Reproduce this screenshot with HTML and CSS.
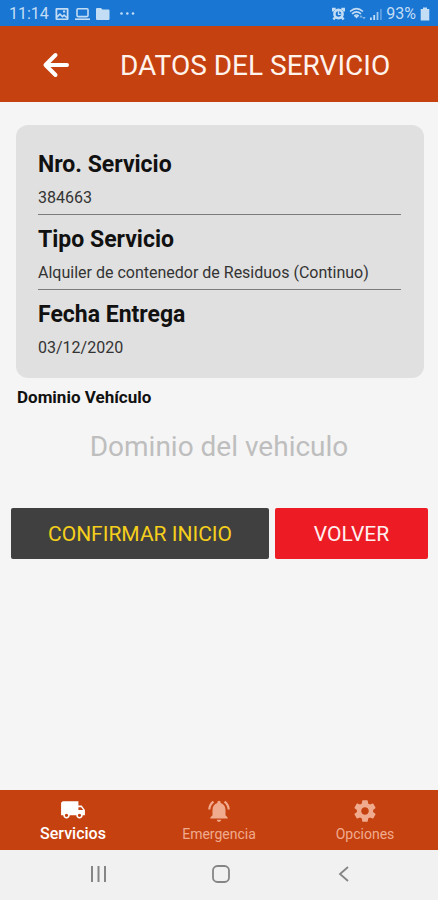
FILE: index.html
```
<!DOCTYPE html>
<html lang="es">
<head>
    <meta charset="UTF-8">
    <meta name="viewport" content="width=device-width, initial-scale=1.0">
    <title>Datos del servicio</title>
    <link rel="stylesheet" href="styles.css">
</head>
<body>
    <div class="status-bar">
        <div class="status-group">
            <span class="status-time">11:14</span>
            <svg width="14" height="14" viewBox="0 0 14 14" fill="currentColor">
                <path fill-rule="evenodd" d="M1.500 1h11q1 0 1 1v10q0 1-1 1h-11q-1 0-1-1V2q0-1 1-1zM2.300 2.800v5.700L5 6l2.500 2.500L9 7l2.700 2.500V2.800zM2.300 10.700v.8h9.400v-.3L9 9.300l-1.500 1.500L5 8.300zM8 3.500h2.200v2H8z"/>
            </svg>
            <svg width="15" height="14" viewBox="0 0 15 14" fill="none" stroke="currentColor" stroke-width="1.600">
                <rect x="2" y="1.800" width="11" height="7.800" rx="1"/>
                <path d="M0 12.200h15"/>
            </svg>
            <svg width="14" height="14" viewBox="0 0 14 14" fill="currentColor">
                <path d="M0 2Q0 1 1 1h4l1.500 1.500H12.500q1 0 1 1V12q0 1-1 1H1q-1 0-1-1z"/>
            </svg>
            <svg class="dots" width="15" height="14" viewBox="0 0 15 14" fill="currentColor">
                <circle cx="1.500" cy="6.500" r="1.300"/>
                <circle cx="7.300" cy="6.500" r="1.300"/>
                <circle cx="13" cy="6.500" r="1.300"/>
            </svg>
        </div>
        <div class="status-group status-right">
            <svg width="13" height="14" viewBox="0 0 14 14" fill="none" stroke="currentColor">
                <circle cx="7" cy="7" r="4.400" stroke-width="2.800"/>
                <path stroke-width="1.400" d="M7 4V7.300h2.500"/>
                <path stroke-width="2.600" d="M1.200 4.200V1.500h2.800M10 1.500h2.800V4.200M3.500 10.500L1.500 13M10.500 10.500L12.500 13"/>
            </svg>
            <svg width="17" height="14" viewBox="0 0 17 14" fill="none" stroke="currentColor" stroke-width="1.600">
                <path d="M1 4.500Q7.500-1.200 14 4.500M3 6.800Q7.500 3 12 6.800M5.200 9Q7.500 7 9.800 9"/>
                <path fill="currentColor" stroke="none" d="M5.300 9h4.400l-2.200 2.600z"/>
                <path fill="currentColor" stroke="none" opacity=".6" d="M12 8l1.700 2.500h-3.400zM15 12.500l-1.700-2.500h3.400z"/>
            </svg>
            <svg width="12" height="14" viewBox="0 0 12 14" fill="currentColor">
                <path d="M0 10.500h1.800V13H0zM3.300 8h1.800v5H3.300z"/>
                <path opacity=".8" d="M6.600 5h1.800v8H6.600z"/>
                <path opacity=".4" d="M10 2h1.800v11H10z"/>
            </svg>
            <span class="status-battery">93%</span>
            <svg width="10" height="14" viewBox="0 0 10 14" fill="currentColor">
                <path d="M3 0.500h4V2h2.300v11.500H0.700V2H3z"/>
            </svg>
        </div>
    </div>

    <header class="header">
        <button class="back-btn" type="button" aria-label="Atrás">
            <svg width="28" height="26" viewBox="0 0 28 26" fill="none" stroke="currentColor" stroke-width="4" stroke-linecap="round" stroke-linejoin="round">
                <path d="M13.500 3L3.500 13l10 10M4 13h21"/>
            </svg>
        </button>
        <h1>DATOS DEL SERVICIO</h1>
    </header>

    <main class="content">
        <dl class="card">
            <div class="card-row">
                <dt>Nro. Servicio</dt>
                <dd>384663</dd>
            </div>
            <div class="card-row">
                <dt>Tipo Servicio</dt>
                <dd>Alquiler de contenedor de Residuos (Continuo)</dd>
            </div>
            <div class="card-row">
                <dt>Fecha Entrega</dt>
                <dd>03/12/2020</dd>
            </div>
        </dl>

        <form class="form">
            <label class="form-label" for="dominio">Dominio Vehículo</label>
            <input class="form-input" id="dominio" type="text" placeholder="Dominio del vehiculo">
            <div class="buttons">
                <button class="btn btn-confirm" type="submit">CONFIRMAR INICIO</button>
                <button class="btn btn-back" type="button">VOLVER</button>
            </div>
        </form>
    </main>

    <nav class="tabs">
        <a class="tab active" href="#servicios">
            <svg width="26" height="26" viewBox="0 1 24 24" fill="currentColor">
                <path d="M20 8h-3V4H3c-1.100 0-2 .9-2 2v11h2c0 1.660 1.340 3 3 3s3-1.340 3-3h6c0 1.660 1.340 3 3 3s3-1.340 3-3h2v-5l-3-4zM6 18.500c-.83 0-1.500-.67-1.500-1.500s.67-1.500 1.500-1.500 1.500.67 1.500 1.500-.67 1.500-1.500 1.500zm13.500-9l1.960 2.500H17V9.500h2.500zm-1.500 9c-.83 0-1.500-.67-1.500-1.500s.67-1.500 1.500-1.500 1.500.67 1.500 1.500-.67 1.500-1.500 1.500z"/>
            </svg>
            <span>Servicios</span>
        </a>
        <a class="tab" href="#emergencia">
            <svg width="26" height="26" viewBox="0 0 24 24" fill="currentColor">
                <path d="M7.580 4.080L6.150 2.650C3.750 4.480 2.170 7.300 2.030 10.500h2c.15-2.650 1.510-4.970 3.550-6.420zm12.390 6.420h2c-.15-3.200-1.730-6.020-4.120-7.850l-1.420 1.430c2.020 1.450 3.390 3.770 3.540 6.420zM18 11c0-3.070-1.640-5.640-4.500-6.320V4c0-.83-.67-1.500-1.500-1.500s-1.500.67-1.500 1.500v.68C7.630 5.360 6 7.920 6 11v5l-2 2v1h16v-1l-2-2v-5zm-6 11c.14 0 .27-.01.4-.04.650-.14 1.180-.58 1.440-1.180.1-.24.150-.5.150-.78h-4c.01 1.100.9 2 2.010 2z"/>
            </svg>
            <span>Emergencia</span>
        </a>
        <a class="tab" href="#opciones">
            <svg width="26" height="26" viewBox="0 0 24 24" fill="currentColor">
                <path d="M19.430 12.980c.04-.32.070-.64.070-.98s-.03-.66-.07-.98l2.110-1.650c.19-.15.240-.42.120-.64l-2-3.460c-.12-.22-.39-.3-.61-.22l-2.490 1c-.52-.4-1.080-.73-1.690-.98l-.38-2.650C14.460 2.180 14.250 2 14 2h-4c-.25 0-.46.180-.49.420l-.38 2.650c-.61.250-1.170.590-1.690.980l-2.490-1c-.23-.09-.49 0-.61.220l-2 3.460c-.13.220-.07.490.120.640l2.110 1.650c-.04.320-.07.650-.07.980s.030.660.070.980l-2.110 1.650c-.19.150-.24.420-.12.640l2 3.460c.12.220.390.300.610.220l2.490-1c.52.400 1.080.730 1.690.980l.38 2.650c.03.240.240.420.490.420h4c.25 0 .46-.18.490-.42l.38-2.650c.61-.25 1.170-.59 1.690-.98l2.490 1c.23.090.490 0 .610-.22l2-3.460c.12-.22.070-.49-.12-.64l-2.110-1.650zM12 15.500c-1.930 0-3.500-1.570-3.500-3.500s1.570-3.500 3.500-3.500 3.500 1.570 3.500 3.500-1.570 3.500-3.500 3.500z"/>
            </svg>
            <span>Opciones</span>
        </a>
    </nav>

    <div class="system-nav">
        <button type="button" aria-label="Recientes">
            <svg width="20" height="20" viewBox="0 0 20 20" fill="none" stroke="currentColor" stroke-width="2">
                <path d="M4 2v16M10.500 2v16M17 2v16"/>
            </svg>
        </button>
        <button type="button" aria-label="Inicio">
            <svg width="20" height="20" viewBox="0 0 20 20" fill="none" stroke="currentColor" stroke-width="1.800">
                <rect x="2" y="2" width="16" height="16" rx="4.500"/>
            </svg>
        </button>
        <button type="button" aria-label="Volver">
            <svg width="20" height="20" viewBox="0 0 20 20" fill="none" stroke="currentColor" stroke-width="1.800">
                <path d="M14 3L6 10l8 7"/>
            </svg>
        </button>
    </div>
</body>
</html>
```

FILE: styles.css
```
:root {
    --orange: #c64110;
    --blue: #1976d3;
    --background: #f5f5f5;
    --card: #e0e0e0;
    --dark: #404040;
    --red: #ed1c24;
    --yellow: #f5cf1b;
}

* {
    margin: 0;
    padding: 0;
    box-sizing: border-box;
}

body {
    display: flex;
    flex-direction: column;
    min-height: 100vh;
    font-family: Roboto, sans-serif;
    background-color: var(--background);
    color: #111;
}

button {
    border: none;
    background: none;
    font-family: inherit;
    cursor: pointer;
}

svg {
    display: block;
}

.status-bar {
    display: flex;
    justify-content: space-between;
    align-items: center;
    height: 26px;
    padding: 1px 8px 0 9px;
    background-color: var(--blue);
    color: #c3ddf5;
    font-size: 16px;
}

.status-group {
    display: flex;
    align-items: center;
    gap: 6px;
}

.status-right {
    gap: 4px;
}

.dots {
    margin-left: 4px;
}

.header {
    display: flex;
    align-items: center;
    height: 76px;
    padding: 2px 42px 0;
    background-color: var(--orange);
    color: #fff3ec;
}

.back-btn {
    color: #fff;
}

.header h1 {
    flex: 1;
    margin-left: 50px;
    font-size: 28px;
    font-weight: 400;
    white-space: nowrap;
}

.content {
    flex: 1;
    padding: 23px 10px 0;
}

.card {
    margin: 0 4px 0 6px;
    padding: 15px 23px 13px 22px;
    background-color: var(--card);
    border-radius: 12px;
}

.card-row {
    padding-top: 8px;
    border-bottom: 1px solid #7c7c7c;
}

.card-row:last-child {
    border-bottom-color: transparent;
}

.card dt {
    font-size: 23px;
    font-weight: 700;
    line-height: 34px;
}

.card dd {
    color: #333;
    font-size: 16px;
    line-height: 32px;
}

.form-label {
    display: block;
    margin-left: 7px;
    font-size: 17px;
    font-weight: 700;
    line-height: 38px;
}

.form-input {
    display: block;
    width: 100%;
    height: 60px;
    border: none;
    outline: none;
    background: none;
    font-family: inherit;
    font-size: 28px;
    text-align: center;
}

.form-input::placeholder {
    color: #bebebe;
}

.buttons {
    display: flex;
    gap: 6px;
    margin-top: 32px;
    padding-left: 1px;
}

.btn {
    height: 51px;
    border-radius: 2px;
    font-size: 21px;
}

.btn-confirm {
    flex: 258;
    background-color: var(--dark);
    color: var(--yellow);
}

.btn-back {
    flex: 153;
    background-color: var(--red);
    color: #fff0f0;
}

.tabs {
    display: flex;
    height: 60px;
    background-color: var(--orange);
}

.tab {
    flex: 1;
    display: flex;
    flex-direction: column;
    align-items: center;
    justify-content: flex-end;
    padding-bottom: 6px;
    color: #f0ab8e;
    font-size: 14px;
    line-height: 20px;
    text-decoration: none;
}

.tab.active {
    color: #fff;
    font-size: 16px;
    font-weight: 500;
}

.system-nav {
    display: flex;
    justify-content: space-between;
    align-items: center;
    height: 50px;
    padding: 0 84px 2px 88px;
    background-color: #f1f1f1;
}

.system-nav button {
    color: #858585;
}
```
